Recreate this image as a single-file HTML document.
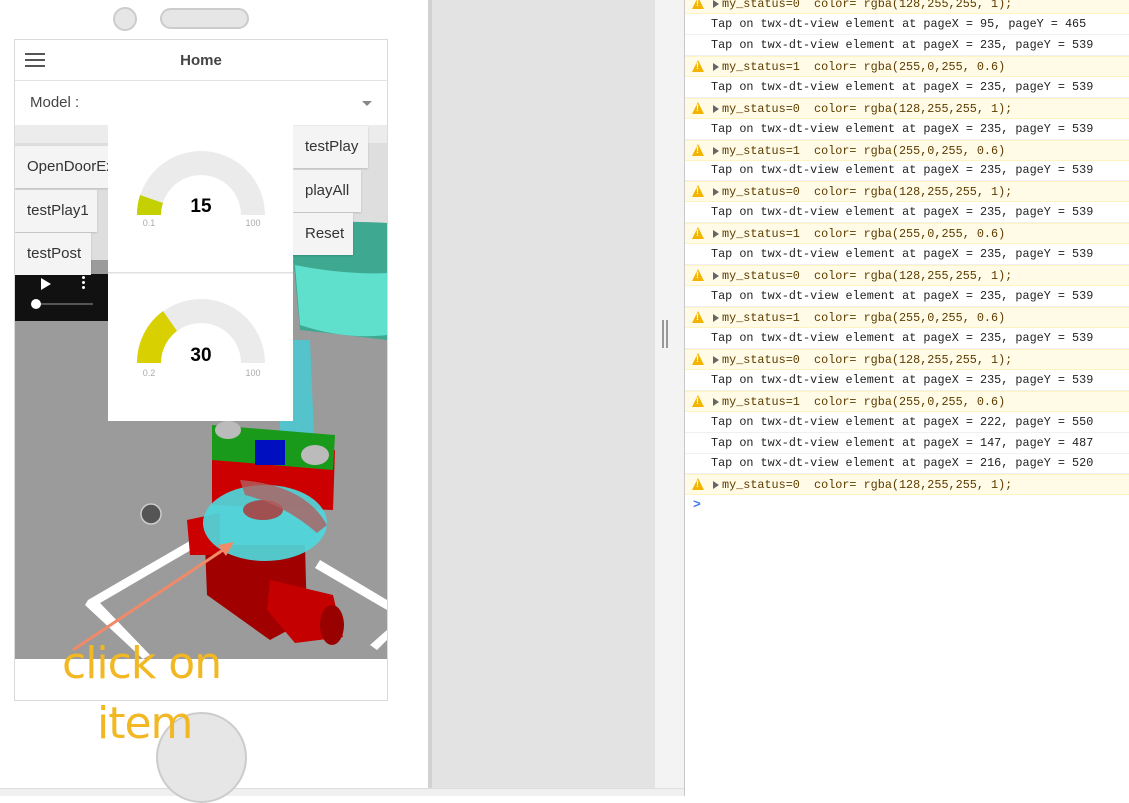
<!DOCTYPE html>
<html><head><meta charset="utf-8"><style>
*{margin:0;padding:0;box-sizing:border-box}
body{width:1129px;height:796px;overflow:hidden;background:#fff;position:relative;font-family:"Liberation Sans",sans-serif}
.abs{position:absolute}
.btn{position:absolute;background:#f4f4f4;color:#333;font-size:15px;padding-left:12px;line-height:42px;box-shadow:0 1px 2px rgba(0,0,0,.15)}
.row{position:absolute;left:685px;width:444px;height:21px;font-family:"Liberation Mono",monospace;font-size:11.8px;line-height:20px;white-space:pre;color:#222;border-bottom:1px solid #f0f0f0}
.row.w{background:#fffbe6;border-top:1px solid #fff3c4;border-bottom:1px solid #fff3c4;color:#5c3c00}
.row span.t{position:absolute;left:26px}
.row span.m{position:absolute;left:37px}
.row i{position:absolute;left:28px;top:6px;width:0;height:0;border-left:6px solid #666;border-top:4px solid transparent;border-bottom:4px solid transparent}
.row b{position:absolute;left:7px;top:3px;width:0;height:0;border-left:6.5px solid transparent;border-right:6.5px solid transparent;border-bottom:12px solid #f2b400}
.row b:after{content:"!";position:absolute;left:-2px;top:1px;font:bold 9px "Liberation Sans";color:#fff}
</style></head><body>
<div class="abs" style="left:428px;top:0;width:4px;height:788px;background:#d2d2d2"></div>
<div class="abs" style="left:432px;top:0;width:223px;height:788px;background:#e3e3e3"></div>
<div class="abs" style="left:655px;top:0;width:29px;height:796px;background:#f3f3f3"></div>
<div class="abs" style="left:684px;top:0;width:1px;height:796px;background:#c8c8c8"></div>
<div class="abs" style="left:0;top:788px;width:684px;height:8px;background:#f0f0f0;border-top:1px solid #ddd"></div>
<div class="abs" style="left:662px;top:320px;width:2px;height:28px;background:#999"></div>
<div class="abs" style="left:666px;top:320px;width:2px;height:28px;background:#999"></div>

<div class="abs" style="left:113px;top:7px;width:24px;height:24px;border-radius:50%;background:#e6e6e6;border:2px solid #ccc"></div>
<div class="abs" style="left:160px;top:8px;width:89px;height:21px;border-radius:11px;background:#e6e6e6;border:2px solid #ccc"></div>
<div class="abs" style="left:156px;top:712px;width:91px;height:91px;border-radius:50%;background:#e6e6e6;border:2px solid #ccc"></div>

<div class="abs" style="left:14px;top:39px;width:374px;height:662px;border:1px solid #dadada;background:#fff;overflow:hidden">
 <div class="abs" style="left:10px;top:13px;width:20px;height:2px;background:#555;box-shadow:0 6px 0 #555,0 12px 0 #555"></div>
 <div class="abs" style="left:0;top:12px;width:372px;text-align:center;font-size:15px;font-weight:bold;color:#444">Home</div>
 <div class="abs" style="left:0;top:40px;width:372px;height:1px;background:#e2e2e2"></div>
 <div class="abs" style="left:15px;top:54px;font-size:15px;color:#444">Model :</div>
 <div class="abs" style="left:347px;top:61px;border-left:5px solid transparent;border-right:5px solid transparent;border-top:5px solid #888"></div>
 <div class="abs" style="left:0;top:85px;width:372px;height:534px;background:#9c9c9c;overflow:hidden">
  <svg width="372" height="534" style="position:absolute;left:0;top:0">
   <rect x="0" y="0" width="372" height="150" fill="#dedede"/>
   <rect x="0" y="0" width="372" height="18" fill="#ececec"/>
   <rect x="0" y="135" width="372" height="399" fill="#9b9b9b"/>
   <path d="M275 100 Q330 95 372 98 L372 215 Q330 210 285 205 Z" fill="#3ea890"/>
   <path d="M280 140 Q330 150 372 148 L372 210 Q330 215 285 200 Z" fill="#5fe0cc"/>
   <path d="M73 475 L185 410 L188 418 L85 478 L135 530 L128 534 L70 480 Z" fill="#fff"/>
   <path d="M305 435 L372 475 L372 485 L300 443 Z" fill="#fff"/>
   <path d="M355 520 L372 505 L372 515 L362 525 Z" fill="#fff"/>
   <path d="M265 215 L295 215 L300 335 L265 335 Z" fill="#4ec8d0" opacity=".9"/>
   <path d="M197 320 L320 325 L318 385 L197 380 Z" fill="#c00"/>
   <path d="M197 300 L320 310 L318 345 L197 335 Z" fill="#1a9a1a"/>
   <ellipse cx="213" cy="305" rx="13" ry="9" fill="#bbb"/>
   <ellipse cx="300" cy="330" rx="14" ry="10" fill="#bbb"/>
   <rect x="240" y="315" width="30" height="25" fill="#0010c0"/>
   <path d="M190 420 L290 420 L292 495 L255 515 L192 470 Z" fill="#a00000"/>
   <path d="M172 395 L205 388 L205 430 L175 430 Z" fill="#c00"/>
   <path d="M255 455 L318 470 L328 512 L280 518 L252 485 Z" fill="#c40000"/>
   <ellipse cx="317" cy="500" rx="12" ry="20" fill="#900"/>
   <ellipse cx="250" cy="398" rx="62" ry="38" fill="#4dd8dc" opacity=".92"/>
   <ellipse cx="248" cy="385" rx="20" ry="10" fill="#a05050"/>
   <path d="M225 355 Q290 360 312 400 L302 408 Q270 380 230 370 Z" fill="#b06060" opacity=".8"/>
   <circle cx="136" cy="389" r="10" fill="#555" stroke="#ccc" stroke-width="1.5"/>
  </svg>
 </div>
 <div class="abs" style="left:0;top:234px;width:93px;height:47px;background:#111"></div>
 <div class="abs" style="left:26px;top:238px;border-left:10px solid #fff;border-top:6px solid transparent;border-bottom:6px solid transparent"></div>
 <div class="abs" style="left:67px;top:236px;width:3px;height:3px;background:#fff;border-radius:50%;box-shadow:0 5px 0 #fff,0 10px 0 #fff"></div>
 <div class="abs" style="left:20px;top:263px;width:58px;height:2px;background:#555"></div>
 <div class="abs" style="left:16px;top:259px;width:10px;height:10px;border-radius:50%;background:#fff"></div>
 <div class="btn" style="left:0;top:106px;width:93px;overflow:hidden;white-space:nowrap">OpenDoorEx</div>
 <div class="btn" style="left:0;top:150px;width:82px">testPlay1</div>
 <div class="btn" style="left:0;top:193px;width:76px">testPost</div>
 <div class="btn" style="left:278px;top:86px;width:75px">testPlay</div>
 <div class="btn" style="left:278px;top:130px;width:68px">playAll</div>
 <div class="btn" style="left:278px;top:173px;width:60px">Reset</div>
 <div class="abs" style="left:93px;top:85px;width:185px;height:296px;background:#fff">
  <svg width="185" height="296">
   <path d="M29 90 A64 64 0 0 1 157 90 L133 90 A40 40 0 0 0 53 90 Z" fill="#ebebeb"/>
   <path d="M29 90 A64 64 0 0 1 32 70 L55 78 A40 40 0 0 0 53 90 Z" fill="#c4d000"/>
   <text x="93" y="87" text-anchor="middle" font-family="Liberation Sans" font-weight="bold" font-size="19">15</text>
   <text x="41" y="101" text-anchor="middle" font-family="Liberation Sans" font-size="9" fill="#aaa">0.1</text>
   <text x="145" y="101" text-anchor="middle" font-family="Liberation Sans" font-size="9" fill="#aaa">100</text>
   <rect x="0" y="147" width="185" height="1.5" fill="#e0e0e0"/>
   <path d="M29 238 A64 64 0 0 1 157 238 L133 238 A40 40 0 0 0 53 238 Z" fill="#ebebeb"/>
   <path d="M29 238 A64 64 0 0 1 55 186 L69 206 A40 40 0 0 0 53 238 Z" fill="#d8d000"/>
   <text x="93" y="236" text-anchor="middle" font-family="Liberation Sans" font-weight="bold" font-size="19">30</text>
   <text x="41" y="251" text-anchor="middle" font-family="Liberation Sans" font-size="9" fill="#aaa">0.2</text>
   <text x="145" y="251" text-anchor="middle" font-family="Liberation Sans" font-size="9" fill="#aaa">100</text>
  </svg>
 </div>
</div>
<svg class="abs" style="left:0;top:0" width="430" height="788">
 <line x1="73" y1="650" x2="226" y2="548" stroke="#f08a68" stroke-width="3"/>
 <path d="M234 542 L218 545 L226 556 Z" fill="#f08a68"/>
</svg>
<div class="abs" style="left:62px;top:638px;font-size:44px;color:#f2b824;font-family:'DejaVu Sans',sans-serif;letter-spacing:-1px">click on</div>
<div class="abs" style="left:97px;top:698px;font-size:44px;color:#f2b824;font-family:'DejaVu Sans',sans-serif;letter-spacing:-1px">item</div>

<div class="row w" style="top:-7px"><b></b><i></i><span class="m">my_status=0  color= rgba(128,255,255, 1);</span></div>
<div class="row" style="top:14px"><span class="t">Tap on twx-dt-view element at pageX = 95, pageY = 465</span></div>
<div class="row" style="top:35px"><span class="t">Tap on twx-dt-view element at pageX = 235, pageY = 539</span></div>
<div class="row w" style="top:56px"><b></b><i></i><span class="m">my_status=1  color= rgba(255,0,255, 0.6)</span></div>
<div class="row" style="top:77px"><span class="t">Tap on twx-dt-view element at pageX = 235, pageY = 539</span></div>
<div class="row w" style="top:98px"><b></b><i></i><span class="m">my_status=0  color= rgba(128,255,255, 1);</span></div>
<div class="row" style="top:119px"><span class="t">Tap on twx-dt-view element at pageX = 235, pageY = 539</span></div>
<div class="row w" style="top:140px"><b></b><i></i><span class="m">my_status=1  color= rgba(255,0,255, 0.6)</span></div>
<div class="row" style="top:160px"><span class="t">Tap on twx-dt-view element at pageX = 235, pageY = 539</span></div>
<div class="row w" style="top:181px"><b></b><i></i><span class="m">my_status=0  color= rgba(128,255,255, 1);</span></div>
<div class="row" style="top:202px"><span class="t">Tap on twx-dt-view element at pageX = 235, pageY = 539</span></div>
<div class="row w" style="top:223px"><b></b><i></i><span class="m">my_status=1  color= rgba(255,0,255, 0.6)</span></div>
<div class="row" style="top:244px"><span class="t">Tap on twx-dt-view element at pageX = 235, pageY = 539</span></div>
<div class="row w" style="top:265px"><b></b><i></i><span class="m">my_status=0  color= rgba(128,255,255, 1);</span></div>
<div class="row" style="top:286px"><span class="t">Tap on twx-dt-view element at pageX = 235, pageY = 539</span></div>
<div class="row w" style="top:307px"><b></b><i></i><span class="m">my_status=1  color= rgba(255,0,255, 0.6)</span></div>
<div class="row" style="top:328px"><span class="t">Tap on twx-dt-view element at pageX = 235, pageY = 539</span></div>
<div class="row w" style="top:349px"><b></b><i></i><span class="m">my_status=0  color= rgba(128,255,255, 1);</span></div>
<div class="row" style="top:370px"><span class="t">Tap on twx-dt-view element at pageX = 235, pageY = 539</span></div>
<div class="row w" style="top:391px"><b></b><i></i><span class="m">my_status=1  color= rgba(255,0,255, 0.6)</span></div>
<div class="row" style="top:412px"><span class="t">Tap on twx-dt-view element at pageX = 222, pageY = 550</span></div>
<div class="row" style="top:433px"><span class="t">Tap on twx-dt-view element at pageX = 147, pageY = 487</span></div>
<div class="row" style="top:453px"><span class="t">Tap on twx-dt-view element at pageX = 216, pageY = 520</span></div>
<div class="row w" style="top:474px"><b></b><i></i><span class="m">my_status=0  color= rgba(128,255,255, 1);</span></div>
<div class="abs" style="left:693px;top:497px;color:#3b7cf0;font:bold 13px 'Liberation Mono',monospace">&gt;</div>
</body></html>
